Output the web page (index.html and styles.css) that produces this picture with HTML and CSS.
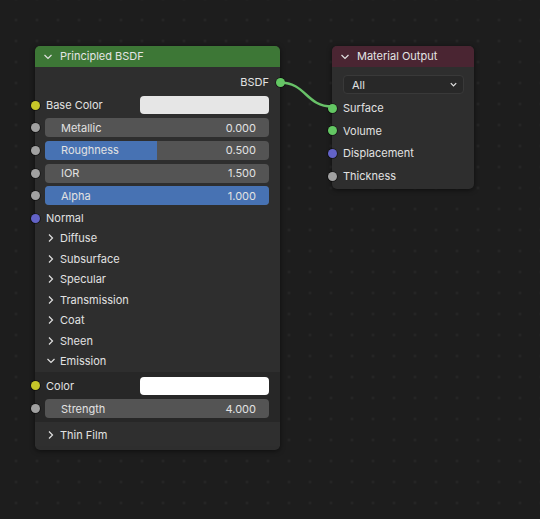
FILE: index.html
```html
<!DOCTYPE html>
<html>
<head>
<meta charset="utf-8">
<link rel="stylesheet" href="styles.css">
</head>
<body>
<div class="canvas">
  <svg class="links" width="540" height="519" viewBox="0 0 540 519">
    <path d="M280 82.5 C306 82.5 306 106.5 332 106.5" fill="none" stroke="#68c268" stroke-width="2.4"/>
  </svg>

  <div class="node bsdf">
    <div class="node-header green">
      <svg class="chev" width="10" height="10" viewBox="0 0 10 10"><path d="M1.5 3 L5 6.5 L8.5 3" fill="none" stroke="#e0e0e0" stroke-width="1.2"/></svg>
      <span>Principled BSDF</span>
    </div>
    <div class="node-body">
      <div class="row out"><span>BSDF</span><i class="sock right s-green"></i></div>
      <div class="row"><i class="sock left s-yellow"></i><span class="lbl">Base Color</span><div class="swatch grey"></div></div>
      <div class="row"><i class="sock left s-grey"></i><div class="slider"><span>Metallic</span><span>0.000</span></div></div>
      <div class="row"><i class="sock left s-grey"></i><div class="slider"><div class="fill" style="width:50%"></div><span>Roughness</span><span>0.500</span></div></div>
      <div class="row"><i class="sock left s-grey"></i><div class="slider"><span>IOR</span><span>1.500</span></div></div>
      <div class="row"><i class="sock left s-grey"></i><div class="slider"><div class="fill" style="width:100%"></div><span>Alpha</span><span>1.000</span></div></div>
      <div class="row"><i class="sock left s-purple"></i><span class="lbl">Normal</span></div>

      <div class="panels">
        <div class="panel-head"><svg class="pchev" width="10" height="10" viewBox="0 0 10 10"><path d="M3 1.5 L6.5 5 L3 8.5" fill="none" stroke="#e0e0e0" stroke-width="1.2"/></svg><span>Diffuse</span></div>
        <div class="panel-head"><svg class="pchev" width="10" height="10" viewBox="0 0 10 10"><path d="M3 1.5 L6.5 5 L3 8.5" fill="none" stroke="#e0e0e0" stroke-width="1.2"/></svg><span>Subsurface</span></div>
        <div class="panel-head"><svg class="pchev" width="10" height="10" viewBox="0 0 10 10"><path d="M3 1.5 L6.5 5 L3 8.5" fill="none" stroke="#e0e0e0" stroke-width="1.2"/></svg><span>Specular</span></div>
        <div class="panel-head"><svg class="pchev" width="10" height="10" viewBox="0 0 10 10"><path d="M3 1.5 L6.5 5 L3 8.5" fill="none" stroke="#e0e0e0" stroke-width="1.2"/></svg><span>Transmission</span></div>
        <div class="panel-head"><svg class="pchev" width="10" height="10" viewBox="0 0 10 10"><path d="M3 1.5 L6.5 5 L3 8.5" fill="none" stroke="#e0e0e0" stroke-width="1.2"/></svg><span>Coat</span></div>
        <div class="panel-head"><svg class="pchev" width="10" height="10" viewBox="0 0 10 10"><path d="M3 1.5 L6.5 5 L3 8.5" fill="none" stroke="#e0e0e0" stroke-width="1.2"/></svg><span>Sheen</span></div>
        <div class="panel-head"><svg class="pchev" width="10" height="10" viewBox="0 0 10 10"><path d="M1.5 3 L5 6.5 L8.5 3" fill="none" stroke="#e0e0e0" stroke-width="1.2"/></svg><span>Emission</span></div>
        <div class="panel-content">
          <div class="row"><i class="sock left s-yellow"></i><span class="lbl">Color</span><div class="swatch white"></div></div>
          <div class="row"><i class="sock left s-grey"></i><div class="slider"><span>Strength</span><span>4.000</span></div></div>
        </div>
        <div class="panel-head last"><svg class="pchev" width="10" height="10" viewBox="0 0 10 10"><path d="M3 1.5 L6.5 5 L3 8.5" fill="none" stroke="#e0e0e0" stroke-width="1.2"/></svg><span>Thin Film</span></div>
      </div>
      <div class="node-foot"></div>
    </div>
  </div>

  <div class="node matout">
    <div class="node-header maroon">
      <svg class="chev" width="10" height="10" viewBox="0 0 10 10"><path d="M1.5 3 L5 6.5 L8.5 3" fill="none" stroke="#e0e0e0" stroke-width="1.2"/></svg>
      <span>Material Output</span>
    </div>
    <div class="node-body mo-body">
      <div class="dropdown"><span>All</span><svg width="9" height="9" viewBox="0 0 10 10"><path d="M2 3.5 L5 6.5 L8 3.5" fill="none" stroke="#e0e0e0" stroke-width="1.4"/></svg></div>
      <div class="row"><i class="sock left s-green"></i><span class="lbl">Surface</span></div>
      <div class="row"><i class="sock left s-green"></i><span class="lbl">Volume</span></div>
      <div class="row"><i class="sock left s-purple"></i><span class="lbl">Displacement</span></div>
      <div class="row"><i class="sock left s-grey"></i><span class="lbl">Thickness</span></div>
    </div>
  </div>
</div>
</body>
</html>
```

FILE: styles.css
```css
* { box-sizing: border-box; }
html, body {
  margin: 0;
  padding: 0;
  width: 540px;
  height: 519px;
  overflow: hidden;
}
body {
  background-color: #1d1d1d;
  font-family: Inter, "Noto Sans", "DejaVu Sans", sans-serif;
  font-size: 11px;
  color: #e2e2e2;
}
.canvas {
  position: relative;
  width: 540px;
  height: 519px;
  background-image: radial-gradient(circle, #262626 0, #262626 1px, rgba(29,29,29,0) 1.7px);
  background-size: 21px 21px;
  background-position: 5.5px 9.5px;
}
.links {
  position: absolute;
  left: 0;
  top: 0;
  z-index: 2;
  pointer-events: none;
}
.node {
  position: absolute;
  border-radius: 5px;
  background: #2e2e2e;
  box-shadow: 0 1px 5px rgba(0,0,0,0.55);
  z-index: 1;
}
.bsdf { left: 35px; top: 46px; width: 245px; height: 404px; }
.matout { left: 332px; top: 46px; width: 142px; height: 143px; }

.node-header {
  height: 21px;
  border-radius: 5px 5px 0 0;
  display: flex;
  align-items: center;
  padding-left: 8px;
  gap: 7px;
  color: #e4e4e4;
}
.node-header span { line-height: 1; }
.green { background: #3d7736; }
.maroon { background: #4a2532; }
.chev { flex: none; }

.node-body {
  display: flex;
  flex-direction: column;
  padding-top: 4px;
}
.row {
  position: relative;
  height: 22.7px;
  flex: none;
  display: flex;
  align-items: center;
  padding: 0 11px 0 11px;
}
.row.out { justify-content: flex-end; }
.lbl { flex: 1; }
.sock {
  position: absolute;
  top: 50%;
  width: 9px;
  height: 9px;
  margin-top: -4.5px;
  border-radius: 50%;
  box-shadow: 0 0 0 0.8px rgba(0,0,0,0.5);
  z-index: 3;
}
.sock.left { left: -4.5px; }
.sock.right { right: -4.5px; }
.s-green { background: #63c763; }
.s-yellow { background: #c7c729; }
.s-grey { background: #a1a1a1; }
.s-purple { background: #6363c7; }

.swatch {
  width: 129px;
  height: 18px;
  border-radius: 4px;
  flex: none;
}
.swatch.grey { background: #e6e6e6; }
.swatch.white { background: #ffffff; }

.slider {
  position: relative;
  flex: 1;
  height: 19px;
  margin-left: -1px;
  border-radius: 4px;
  background: #545454;
  overflow: hidden;
  display: flex;
  align-items: center;
  justify-content: space-between;
  padding: 0 13px 0 16px;
}
.slider span { position: relative; }
.fill {
  position: absolute;
  left: 0;
  top: 0;
  bottom: 0;
  background: #4772b3;
}

.panels {
  display: flex;
  flex-direction: column;
  margin-top: -2.2px;
}
.panel-head {
  height: 20.6px;
  flex: none;
  display: flex;
  align-items: center;
  padding-left: 11px;
  gap: 4px;
}
.pchev { flex: none; }
.panel-content {
  background: #272727;
  padding: 2.75px 0 2.5px;
}
.panel-head.last {
  height: 23.5px;
  padding-top: 2px;
  background: #2f2f2f;
}
.node-foot {
  flex: 1;
  height: 4px;
  background: #292929;
  border-radius: 0 0 5px 5px;
}

.mo-body { padding-top: 8px; }
.dropdown {
  margin: 0 10px 3px 11px;
  height: 19px;
  border-radius: 4px;
  background: #282828;
  border: 1px solid #393939;
  display: flex;
  align-items: center;
  justify-content: space-between;
  padding: 0 5px 0 8px;
}
.mo-body .row { padding-left: 11px; height: 22.6px; }
```
